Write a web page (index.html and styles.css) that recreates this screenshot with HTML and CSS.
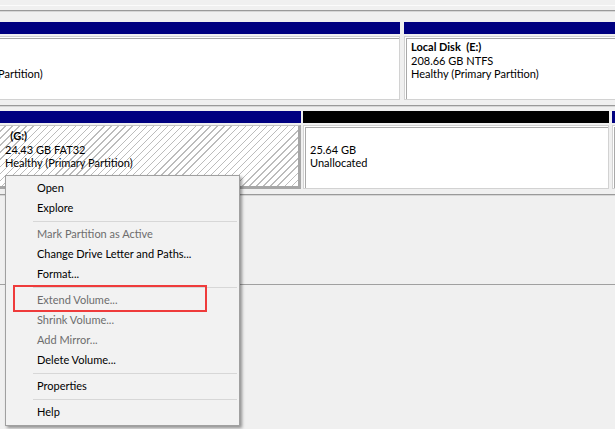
FILE: index.html
```html
<!DOCTYPE html>
<html lang="en">
<head>
  <meta charset="UTF-8">
  <title>Disk Management</title>
  <link rel="stylesheet" href="styles.css">
</head>
<body>
  <div class="graph">
    <div class="top-edge"></div>
    <div class="rule"></div>

    <div class="disk disk-first">
      <div class="part part-a">
        <div class="part-bar primary"></div>
        <div class="part-body">
          <p class="label">&nbsp;</p>
          <p>&nbsp;</p>
          <p>Healthy (Primary Partition)</p>
        </div>
      </div>
      <div class="part part-e">
        <div class="part-bar primary"></div>
        <div class="part-body">
          <p class="label">Local Disk&nbsp; (E:)</p>
          <p>208.66 GB NTFS</p>
          <p>Healthy (Primary Partition)</p>
        </div>
      </div>
    </div>
    <div class="rule"></div>

    <div class="disk disk-second">
      <div class="part part-g">
        <div class="part-bar primary"></div>
        <div class="part-body selected">
          <p class="label">&nbsp; (G:)</p>
          <p>24.43 GB FAT32</p>
          <p>Healthy (Primary Partition)</p>
        </div>
      </div>
      <div class="part part-free">
        <div class="part-bar unallocated"></div>
        <div class="part-body">
          <p>&nbsp;</p>
          <p>25.64 GB</p>
          <p>Unallocated</p>
        </div>
      </div>
      <div class="part part-next">
        <div class="part-bar primary"></div>
        <div class="part-body"></div>
      </div>
    </div>
    <div class="rule"></div>

    <div class="lower"></div>
  </div>

  <ul class="menu">
    <li>Open</li>
    <li>Explore</li>
    <li class="sep"></li>
    <li class="off">Mark Partition as Active</li>
    <li>Change Drive Letter and Paths...</li>
    <li>Format...</li>
    <li class="sep"></li>
    <li class="off">Extend Volume...</li>
    <li class="off">Shrink Volume...</li>
    <li class="off">Add Mirror...</li>
    <li>Delete Volume...</li>
    <li class="sep"></li>
    <li>Properties</li>
    <li class="sep"></li>
    <li>Help</li>
  </ul>

  <div class="highlight"></div>
</body>
</html>
```

FILE: styles.css
```css
html, body {
  margin: 0;
  width: 615px;
  height: 429px;
  overflow: hidden;
}

body {
  background-color: #f0f0f0;
  font-family: Lato, 'Noto Sans', sans-serif;
  font-size: 11px;
  color: #000;
  position: relative;
}

.graph {
  display: flex;
  flex-direction: column;
}

.top-edge {
  height: 5px;
  border-bottom: 1px solid #fbfbfb;
  margin-bottom: 4px;
}

.rule {
  height: 1px;
  background-color: #9a9a9a;
  border-bottom: 1px solid #d6d6d6;
}

.disk {
  display: flex;
  padding-bottom: 5px;
}

.disk-first {
  margin-left: -92px;
  padding-top: 10px;
  gap: 4px;
}

.disk-second {
  margin-left: -2px;
  padding-top: 4px;
  gap: 2px;
}

.part {
  display: flex;
  flex-direction: column;
  gap: 2px;
  flex-shrink: 0;
}

.part-a { width: 492px; }
.part-e { width: 260px; }
.part-g { width: 303px; }
.part-free { width: 306px; margin-right: 1px; }
.part-next { width: 60px; }

.part-bar {
  height: 12px;
}

.part-bar.primary {
  background-color: #000080;
}

.part-bar.unallocated {
  background-color: #000;
}

.part-body {
  height: 64px;
  box-sizing: border-box;
  background-color: #fff;
  border: 1px solid #d2d2d2;
  box-shadow: inset 1px 1px 0 #fff, inset 2px 2px 0 #a9a9a9;
  padding: 3px 6px 0;
  line-height: 13.5px;
}

.part-body.selected {
  background: repeating-linear-gradient(135deg, #fff 0 4px, #bcbcbc 4px 5px);
  border: 1px solid #c4c4c4;
  border-right: 3px solid #a6a6a6;
  border-bottom: 3px solid #a6a6a6;
  box-shadow: none;
}

.part-body p {
  margin: 0;
  white-space: nowrap;
}

.label {
  font-weight: bold;
}

.lower {
  height: 88px;
  border-bottom: 1px solid #a0a0a0;
}

.menu {
  position: absolute;
  left: 5px;
  top: 175px;
  width: 233px;
  margin: 0;
  padding: 2px 0 3px;
  list-style: none;
  background-color: #f2f2f2;
  border: 1px solid #a0a0a0;
  box-shadow: 2px 2px 3px rgba(0, 0, 0, 0.4);
}

.menu li {
  height: 20px;
  line-height: 20px;
  padding-left: 31px;
  white-space: nowrap;
}

.menu li.off {
  color: #6d6d6d;
}

.menu li.sep {
  height: 6px;
  padding: 0;
  margin-left: 27px;
  margin-right: 2px;
  background: linear-gradient(#d7d7d7, #d7d7d7) 0 3px / 100% 1px no-repeat;
}

.highlight {
  position: absolute;
  left: 13px;
  top: 285px;
  width: 190px;
  height: 23px;
  border: 2px solid #ef3b3b;
}
```
